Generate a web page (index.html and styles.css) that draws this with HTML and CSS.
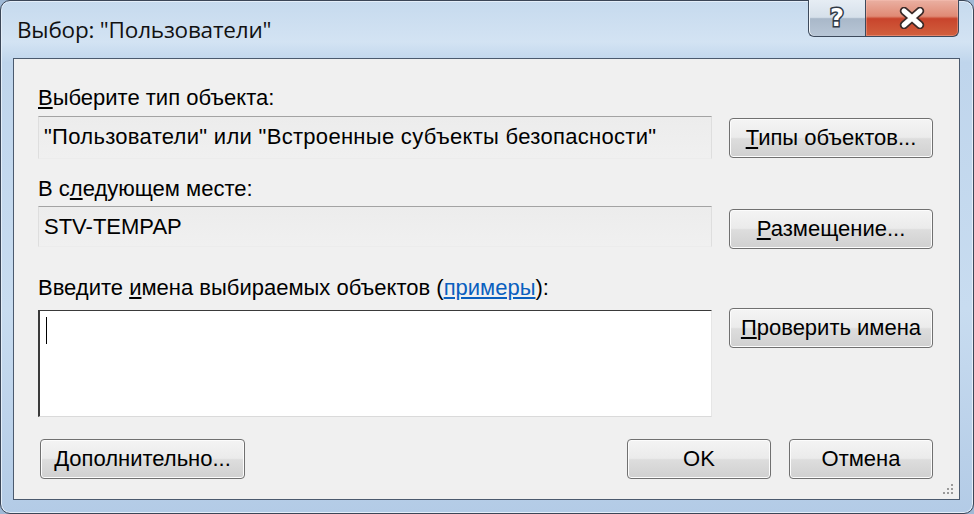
FILE: index.html
```html
<!DOCTYPE html>
<html lang="ru">
<head>
<meta charset="utf-8">
<title>Выбор: "Пользователи"</title>
<link rel="stylesheet" href="styles.css">
</head>
<body>
<div class="window">
  <div class="titlebar">
    <span class="title">Выбор: "Пользователи"</span>
    <div class="caption-btns">
      <div class="cbtn help">
        <svg width="20" height="26" viewBox="0 0 20 26"><text x="10" y="21" text-anchor="middle" class="qmark">?</text></svg>
      </div>
      <div class="cbtn close">
        <svg width="30" height="22" viewBox="0 0 30 22">
          <path d="M7 4 L23 18 M23 4 L7 18" stroke="#3a2a28" stroke-width="8.5" stroke-linecap="round"/>
          <path d="M7 4 L23 18 M23 4 L7 18" stroke="#ffffff" stroke-width="5" stroke-linecap="round"/>
        </svg>
      </div>
    </div>
  </div>
  <div class="client">
    <div class="grid">
      <div class="label"><u>В</u>ыберите тип объекта:</div>
      <div class="spacer"></div>
      <div class="field ro f1">"Пользователи" или "Встроенные субъекты безопасности"</div>
      <button class="btn side"><u>Т</u>ипы объектов...</button>
      <div class="label l2">В с<u>л</u>едующем месте:</div>
      <div class="spacer"></div>
      <div class="field ro f2">STV-TEMPAP</div>
      <button class="btn side"><u>Р</u>азмещение...</button>
      <div class="label l3">Введите <u>и</u>мена выбираемых объектов (<a class="link">примеры</a>):</div>
      <div class="spacer"></div>
      <div class="field edit"><span class="caret"></span></div>
      <button class="btn side"><u>П</u>роверить имена</button>
    </div>
    <div class="footer">
      <button class="btn wide"><u>Д</u>ополнительно...</button>
      <div class="right-btns">
        <button class="btn std">OK</button>
        <button class="btn std">Отмена</button>
      </div>
    </div>
    <svg class="grip" width="14" height="14" viewBox="0 0 14 14">
      <rect x="10" y="2" width="2" height="2" fill="#9a9a9a"/>
      <rect x="6" y="6" width="2" height="2" fill="#9a9a9a"/>
      <rect x="10" y="6" width="2" height="2" fill="#9a9a9a"/>
      <rect x="2" y="10" width="2" height="2" fill="#9a9a9a"/>
      <rect x="6" y="10" width="2" height="2" fill="#9a9a9a"/>
      <rect x="10" y="10" width="2" height="2" fill="#9a9a9a"/>
    </svg>
  </div>
</div>
</body>
</html>
```
FILE: styles.css
```css
html, body {
  margin: 0;
  padding: 0;
  background: #9fb9d6;
}
.window {
  box-sizing: border-box;
  width: 974px;
  height: 514px;
  border: 1px solid #3b4657;
  border-radius: 10px;
  padding: 0 13px 13px 12px;
  background: linear-gradient(180deg, #c6daee 0%, #d3e3f3 8%, #bfd5ec 12%, #c8dcf0 60%, #b3cbe6 100%);
  box-shadow: inset 0 0 0 1px #e4eef9;
  display: flex;
  flex-direction: column;
}
.titlebar {
  height: 57px;
  display: flex;
  justify-content: space-between;
  align-items: flex-start;
}
.title {
  font-family: "Open Sans", "Noto Sans", sans-serif;
  font-size: 22.5px;
  line-height: 26px;
  color: #111;
  margin-top: 16px;
  margin-left: 4px;
  letter-spacing: -0.2px;
}
.caption-btns {
  display: flex;
  margin-right: 1px;
  margin-top: -1px;
}
.cbtn {
  height: 37px;
  box-sizing: border-box;
  border: 1px solid #3d4a5c;
  border-top: none;
  display: flex;
  align-items: center;
  justify-content: center;
}
.help {
  width: 57px;
  border-right: none;
  border-radius: 0 0 0 6px;
  background: linear-gradient(180deg, #e6edf4 0%, #d6e0ea 48%, #a9b8c9 52%, #b8c6d6 100%);
  box-shadow: inset 1px 0 0 #f2f6fa;
}
.close {
  width: 94px;
  border-radius: 0 0 6px 0;
  background: linear-gradient(180deg, #eab0a2 0%, #e08a75 45%, #c8442c 52%, #d2603e 100%);
  box-shadow: inset 0 0 0 1px rgba(255,200,190,0.35);
}
.qmark {
  font-family: "DejaVu Sans", sans-serif;
  font-weight: bold;
  font-size: 24px;
  fill: #ffffff;
  stroke: #2f3946;
  stroke-width: 3px;
  paint-order: stroke;
}
.client {
  flex: 1;
  position: relative;
  border: 1px solid #4b5a6e;
  background: #f0f0f0;
  padding: 27px 26px 0 24px;
  font-family: "Liberation Sans", Arial, sans-serif;
  font-size: 22px;
  color: #000;
  display: flex;
  flex-direction: column;
}
.grid {
  display: grid;
  grid-template-columns: 674px 204px;
  column-gap: 17px;
  align-items: start;
}
.label {
  line-height: 24px;
  white-space: nowrap;
}
.label.l2 { margin-top: 18px; }
.label.l3 { margin-top: 27px; }
.field {
  box-sizing: border-box;
  white-space: nowrap;
  overflow: hidden;
  line-height: 24px;
}
.field.ro {
  margin-top: 6px;
  border-top: 1px solid #a3a3a3;
  border-left: 1px solid #dedede;
  border-right: 1px solid #dedede;
  border-bottom: 1px solid #ececec;
  background: linear-gradient(180deg, #ececec 0%, #f0f0f0 100%);
  padding: 8px 5px 0;
}
.field.f1 { height: 43px; letter-spacing: 0.3px; }
.field.f2 { height: 41px; margin-top: 5px; padding-top: 8px; }
.field.edit {
  margin-top: 10px;
  height: 107px;
  background: #fff;
  border-top: 1px solid #3a3a3a;
  border-left: 2px solid #3a3a3a;
  border-right: 1px solid #e6e6e6;
  border-bottom: 1px solid #dadada;
  padding: 6px 4px;
}
.caret {
  display: block;
  width: 1px;
  height: 27px;
  background: #000;
  margin-left: 2px;
}
.link {
  color: #0a5fbf;
  text-decoration: underline;
}
.btn {
  box-sizing: border-box;
  height: 40px;
  border: 1px solid #707070;
  border-radius: 4px;
  background: linear-gradient(180deg, #f4f4f4 0%, #ebebeb 48%, #dddddd 52%, #d0d0d0 100%);
  box-shadow: inset 0 0 0 1px #fcfcfc;
  font-family: "Liberation Sans", Arial, sans-serif;
  font-size: 22px;
  color: #000;
  padding: 0;
  margin: 0;
  line-height: 24px;
  white-space: nowrap;
}
.btn.side {
  margin-top: 8px;
  width: 204px;
}
.btn.wide { width: 205px; margin-left: 2px; }
.btn.std { width: 144px; }
.footer {
  margin-top: 22px;
  display: flex;
  justify-content: space-between;
}
.right-btns {
  display: flex;
  gap: 18px;
}
.grip {
  position: absolute;
  right: 4px;
  bottom: 3px;
}
```
